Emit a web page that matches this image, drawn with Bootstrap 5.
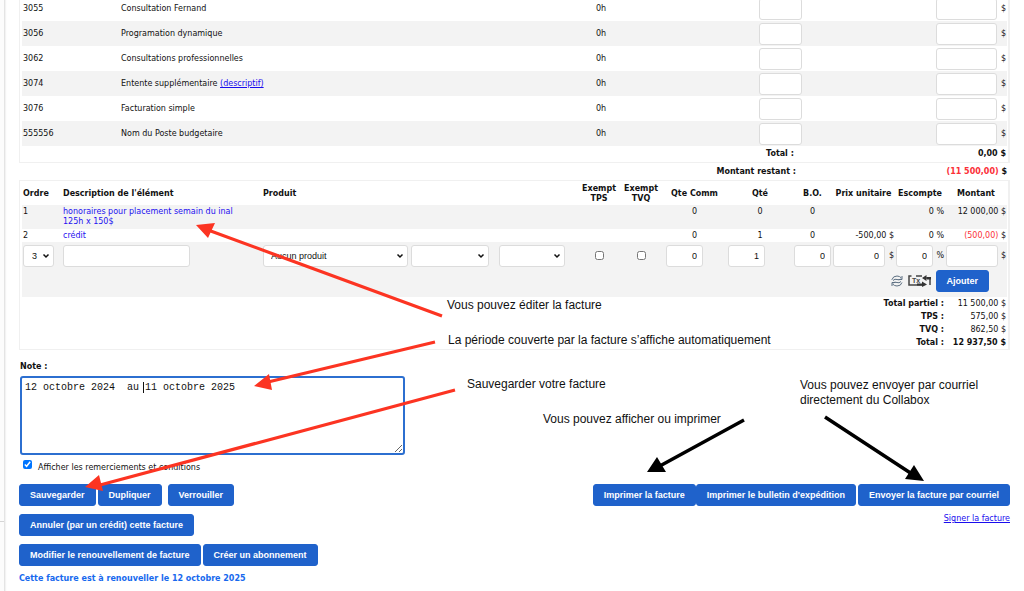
<!DOCTYPE html>
<html lang="fr">
<head>
<meta charset="utf-8">
<meta name="viewport" content="width=device-width, initial-scale=1">
<title>Facture</title>
<link href="https://cdn.jsdelivr.net/npm/bootstrap@5.3.0/dist/css/bootstrap.min.css" rel="stylesheet">
<style>
:root { --blue: #1f62cb; --stripe: #f3f3f3; --line: #f0f0f0; }
body { font: 8px/10px "DejaVu Sans", Verdana, sans-serif; color: #111; background: #fff; overflow-x: hidden; }
a { color: #1a0dee; }
.gutter { width: 5px; background: #fcfcfc; border-right: 1px solid #e4e4e4; box-shadow: 1px 0 1px #f3f3f3; }
.gutter hr { margin: 521px 0 0; opacity: 1; border-color: #d5d5d5; }
.sheet { padding: 0 14px 0 14px; min-width: 0; }
.panel { border: 1px solid var(--line); border-width: 1px 2px 1px 1px; padding: 0 1px 0 2px; }
.panel-budget { margin-top: -5px; }
table { width: 100%; table-layout: fixed; border-collapse: collapse; }
td, th { padding: 0 1px; white-space: nowrap; }
.stripe { background: var(--stripe); }
.budget tbody tr { height: 25px; }
.budget tbody td { padding-top: 1px; }
.budget tfoot tr { height: 16px; }
.field { border: 1px solid #dcdcdc; border-radius: 3px; background: #fff; height: 22px; font: 9px/12px "Liberation Sans", Arial, sans-serif; color: #111; padding: 0 6px; display: inline-block; vertical-align: middle; }
select.field { appearance: none; padding: 0 14px 0 7px; background: #fff url("data:image/svg+xml,%3Csvg xmlns='http://www.w3.org/2000/svg' viewBox='0 0 8 6'%3E%3Cpath d='M1.5 1.5 4 4 6.5 1.5' fill='none' stroke='%23111' stroke-width='1.5'/%3E%3C/svg%3E") no-repeat right 3px center / 8px 6px; }
.w-hours { width: 43px; } .w-money { width: 61px; }
.w-qty { width: 37px; padding: 0 5px; } .w-price { width: 52px; padding: 0 5px; }
.remaining { padding: 4px 3px 3px 0; }
.remaining-sum { width: 211px; }
.items td { vertical-align: top; padding-top: 2px; }
.items thead tr { height: 24px; }
.items thead th { padding-top: 2px; }
.items .entry td { vertical-align: middle; padding-top: 0; height: 28px; }
.items .entry .actions { vertical-align: top; height: 27px; }
.items a { color: #1d10f0; text-decoration: none; }
.items tfoot tr { height: 13px; }
.items tfoot td, .items tfoot th { height: 13px; padding-top: 2px; vertical-align: top; }
.neg { color: #fb3038; }
.tick { width: 9px; height: 9px; margin: 0; display: inline-block; vertical-align: middle; }
.tools { gap: 5px; padding-right: 17px; }
.btn-act { --bs-btn-color: #fff; --bs-btn-bg: var(--blue); --bs-btn-border-color: var(--blue); --bs-btn-hover-bg: #174fa8; --bs-btn-hover-color: #fff; --bs-btn-padding-x: 10px; --bs-btn-padding-y: 0; --bs-btn-border-radius: 3px; font: bold 9px/20px "Liberation Sans", Arial, sans-serif; white-space: nowrap; }
.note-form { padding-top: 12px; }
.note-form > label { padding-left: 1px; margin-bottom: 4px; }
.note { width: 385px; height: 79px; margin-left: 1px; border: 2px solid #2c6fd0; border-radius: 3px; padding: 3px; font: 10px/13px "Liberation Mono", "Courier New", monospace; color: #111; display: block; outline: 0; }
.thanks { padding: 5px 0 11px 4px; gap: 6px; }
.thanks label { padding-top: 3px; }
.gap-row { gap: 2px; }
.lock { margin-left: 4px; }
.second { margin-top: 8px; }
.renew { color: #1769ee; margin: 8px 0 0; }
.overlay { position: absolute; left: 0; top: 0; width: 1024px; height: 591px; pointer-events: none; overflow: hidden; }
.callout-text { position: absolute; margin: 0; font: 12px/15px "Liberation Sans", Arial, sans-serif; color: #111; white-space: nowrap; }
</style>
<script src="https://cdn.jsdelivr.net/npm/bootstrap@5.3.0/dist/js/bootstrap.bundle.min.js"></script>
</head>
<body>
<div class="d-flex position-relative min-vh-100">
  <aside class="gutter flex-shrink-0"><hr></aside>
  <main class="sheet flex-grow-1">
    <section class="panel panel-budget">
      <table class="budget">
        <colgroup><col style="width:98px"><col><col style="width:163px"><col style="width:177px"><col style="width:72px"></colgroup>
        <tbody>
          <tr><td>3055</td><td>Consultation Fernand</td><td>0h</td><td><input class="field w-hours" aria-label="Heures 3055"></td><td><div class="d-flex align-items-center justify-content-between"><input class="field w-money" aria-label="Montant 3055"><span>$</span></div></td></tr>
          <tr class="stripe"><td>3056</td><td>Programation dynamique</td><td>0h</td><td><input class="field w-hours" aria-label="Heures 3056"></td><td><div class="d-flex align-items-center justify-content-between"><input class="field w-money" aria-label="Montant 3056"><span>$</span></div></td></tr>
          <tr><td>3062</td><td>Consultations professionnelles</td><td>0h</td><td><input class="field w-hours" aria-label="Heures 3062"></td><td><div class="d-flex align-items-center justify-content-between"><input class="field w-money" aria-label="Montant 3062"><span>$</span></div></td></tr>
          <tr class="stripe"><td>3074</td><td>Entente supplémentaire <a href="#">(descriptif)</a></td><td>0h</td><td><input class="field w-hours" aria-label="Heures 3074"></td><td><div class="d-flex align-items-center justify-content-between"><input class="field w-money" aria-label="Montant 3074"><span>$</span></div></td></tr>
          <tr><td>3076</td><td>Facturation simple</td><td>0h</td><td><input class="field w-hours" aria-label="Heures 3076"></td><td><div class="d-flex align-items-center justify-content-between"><input class="field w-money" aria-label="Montant 3076"><span>$</span></div></td></tr>
          <tr class="stripe"><td>555556</td><td>Nom du Poste budgetaire</td><td>0h</td><td><input class="field w-hours" aria-label="Heures 555556"></td><td><div class="d-flex align-items-center justify-content-between"><input class="field w-money" aria-label="Montant 555556"><span>$</span></div></td></tr>
        </tbody>
        <tfoot>
          <tr class="fw-bold"><td></td><td></td><td></td><td class="ps-2">Total :</td><td class="text-end">0,00 $</td></tr>
        </tfoot>
      </table>
    </section>

    <div class="remaining d-flex justify-content-end fw-bold"><span>Montant restant :</span><span class="text-end remaining-sum"><span class="neg">(11 500,00)</span> $</span></div>

    <section class="panel">
      <table class="items">
        <colgroup><col style="width:40px"><col><col style="width:148px"><col style="width:88px"><col style="width:80px"><col style="width:42px"><col style="width:42px"><col style="width:65px"><col style="width:66px"><col style="width:39px"><col style="width:63px"><col style="width:50px"><col style="width:62px"></colgroup>
        <thead>
          <tr><th>Ordre</th><th>Description de l'élément</th><th colspan="3">Produit</th><th class="text-center">Exempt<br>TPS</th><th class="text-center">Exempt<br>TVQ</th><th class="text-center">Qte Comm</th><th class="text-center">Qté</th><th class="text-center">B.O.</th><th class="text-center">Prix unitaire</th><th class="text-center">Escompte</th><th class="text-center">Montant</th></tr>
        </thead>
        <tbody>
          <tr class="stripe" style="height:24px"><td>1</td><td><a href="#">honoraires pour placement semain du inal<br>125h x 150$</a></td><td colspan="3"></td><td></td><td></td><td class="text-center">0</td><td class="text-center">0</td><td class="text-center">0</td><td></td><td class="text-end">0 %</td><td class="text-end">12 000,00 $</td></tr>
          <tr style="height:13px"><td>2</td><td><a href="#">crédit</a></td><td colspan="3"></td><td></td><td></td><td class="text-center">0</td><td class="text-center">1</td><td class="text-center">0</td><td class="text-end">-500,00 $</td><td class="text-end">0 %</td><td class="text-end"><span class="neg">(500,00)</span> $</td></tr>
          <tr class="stripe entry">
            <td><select class="field px-2" style="width:31px" aria-label="Ordre"><option>3</option></select></td>
            <td><input class="field" style="width:127px" aria-label="Description"></td>
            <td><select class="field" style="width:145px" aria-label="Produit"><option>Aucun produit</option></select></td>
            <td><select class="field" style="width:78px" aria-label="Catégorie"><option></option></select></td>
            <td><select class="field" style="width:66px" aria-label="Type"><option></option></select></td>
            <td class="text-center"><input type="checkbox" class="tick" aria-label="Exempt TPS"></td>
            <td class="text-center"><input type="checkbox" class="tick" aria-label="Exempt TVQ"></td>
            <td class="ps-1"><input class="field w-qty text-end" value="0" aria-label="Quantité commandée"></td>
            <td><input class="field w-qty text-end" value="1" aria-label="Quantité"></td>
            <td><input class="field w-qty text-end" value="0" aria-label="B.O."></td>
            <td><div class="d-flex align-items-center justify-content-between"><input class="field w-price text-end" value="0" aria-label="Prix unitaire"><span>$</span></div></td>
            <td><div class="d-flex align-items-center justify-content-between"><input class="field w-qty text-end" value="0" aria-label="Escompte"><span>%</span></div></td>
            <td><div class="d-flex align-items-center justify-content-between"><input class="field w-price" aria-label="Montant"><span>$</span></div></td>
          </tr>
          <tr class="stripe entry"><td colspan="13" class="actions">
            <div class="d-flex justify-content-end align-items-center tools">
              <svg width="12" height="12" viewBox="0 0 12 12" fill="none" stroke="#5c6f82" aria-hidden="true"><path d="M1 5V4.500Q2 1 6 1 8.500 1 10.500 3M11 1V4.500H7.500M11 7.500Q10 11 6 11 3.500 11 1.500 9M1 11V7.500H4.500M2 5.500Q4 3.500 6 4.500T10 4M2 8Q4 6.500 6 7.500T10 6.500"/></svg>
              <svg width="23" height="12" viewBox="0 0 23 12" aria-hidden="true"><path d="M3.500 1H1V10H15M8 1H14M22 10V3H18" fill="none" stroke="#444" stroke-width="1.500"/><path d="M14 6.500 19 9.500 14 12ZM18.500 0 14 3 18.500 6ZM18 2h5v2.500h-5zM9 8.500h6v2h-6z" fill="#333"/><text x="4" y="8" font-size="7" font-weight="bold" font-family="Liberation Sans" fill="#444">Tx</text></svg>
              <button type="button" class="btn btn-act">Ajouter</button>
            </div></td></tr>
        </tbody>
        <tfoot>
          <tr><th colspan="12" class="text-end">Total partiel :</th><td class="text-end">11 500,00 $</td></tr>
          <tr><th colspan="12" class="text-end">TPS :</th><td class="text-end">575,00 $</td></tr>
          <tr><th colspan="12" class="text-end">TVQ :</th><td class="text-end">862,50 $</td></tr>
          <tr><th colspan="12" class="text-end">Total :</th><td class="text-end fw-bold">12 937,50 $</td></tr>
        </tfoot>
      </table>
    </section>

    <form class="note-form" onsubmit="return false">
      <label for="note" class="fw-bold d-block">Note :</label>
      <textarea id="note" class="note" spellcheck="false">12 octobre 2024  au 11 octobre 2025</textarea>
      <div class="d-flex thanks"><input type="checkbox" class="tick" id="thanks" checked><label for="thanks">Afficher les remerciements et conditions</label></div>
      <div class="d-flex justify-content-between">
        <div class="d-flex gap-row"><button class="btn btn-act">Sauvegarder</button><button class="btn btn-act">Dupliquer</button><button class="btn btn-act lock">Verrouiller</button></div>
        <div class="d-flex gap-row"><div class="d-flex"><button class="btn btn-act">Imprimer la facture</button><button class="btn btn-act">Imprimer le bulletin d'expédition</button></div><button class="btn btn-act">Envoyer la facture par courriel</button></div>
      </div>
      <div class="d-flex justify-content-between second"><button class="btn btn-act">Annuler (par un crédit) cette facture</button><a href="#">Signer la facture</a></div>
      <div class="d-flex gap-row second"><button class="btn btn-act">Modifier le renouvellement de facture</button><button class="btn btn-act">Créer un abonnement</button></div>
      <p class="renew fw-bold">Cette facture est à renouveller le 12 octobre 2025</p>
    </form>
  </main>

  <div class="overlay">
    <svg class="w-100 h-100" viewBox="0 0 1024 591" aria-hidden="true">
      <g stroke="#fc3422" stroke-width="3.200" fill="#fc3422">
        <path d="M442 316 208 230M435 342 268 382M455 390 100 485"/>
        <path stroke="none" d="M196 225 215 223 208 238ZM254 386 269 374 272 390ZM85 487 99 475 103 491Z"/>
      </g>
      <g stroke="#000" stroke-width="3.500">
        <path d="M744 420 658 467M825 417 912 474"/>
        <path stroke="none" d="M647 472 657 457 666 472ZM924 481 905 479 914 465Z"/>
      </g>
      <path d="M143.500 382V393" stroke="#111"/>
    </svg>
    <p class="callout-text" style="left:447px;top:298px">Vous pouvez éditer la facture</p>
    <p class="callout-text" style="left:448px;top:333px">La période couverte par la facture s’affiche automatiquement</p>
    <p class="callout-text" style="left:467px;top:377px">Sauvegarder votre facture</p>
    <p class="callout-text" style="left:543px;top:412px">Vous pouvez afficher ou imprimer</p>
    <p class="callout-text" style="left:800px;top:378px">Vous pouvez envoyer par courriel<br>directement du Collabox</p>
  </div>
</div>
</body>
</html>
